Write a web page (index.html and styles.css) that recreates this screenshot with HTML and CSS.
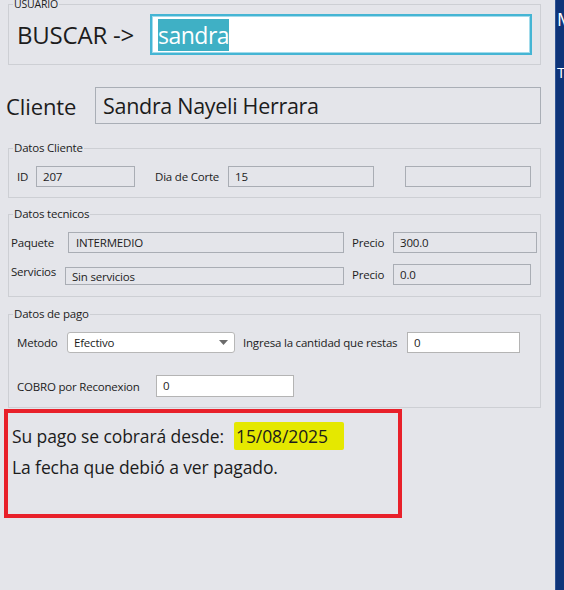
FILE: index.html
```html
<!DOCTYPE html>
<html lang="es">
<head>
    <meta charset="UTF-8">
    <meta name="viewport" content="width=device-width, initial-scale=1.0">
    <title>Cobro-Cliente</title>
    <link rel="stylesheet" href="styles.css">
</head>
<body>
    <div class="app">
        <div class="main">
            <fieldset class="group group-user">
                <legend class="legend-user">USUARIO</legend>
                <div class="search-row">
                    <span class="search-label">BUSCAR -&gt;</span>
                    <div class="search-input"><span class="selected">sandra</span></div>
                </div>
            </fieldset>

            <div class="client-row">
                <span class="client-label">Cliente</span>
                <div class="client-name">Sandra Nayeli Herrara</div>
            </div>

            <fieldset class="group group-client">
                <legend>Datos Cliente</legend>
                <div class="row">
                    <span class="lbl w-id">ID</span>
                    <div class="field f-id">207</div>
                    <span class="lbl w-corte">Dia de Corte</span>
                    <div class="field f-corte">15</div>
                    <div class="field f-blank"></div>
                </div>
            </fieldset>

            <fieldset class="group group-tec">
                <legend>Datos tecnicos</legend>
                <div class="row">
                    <span class="lbl w-paquete">Paquete</span>
                    <div class="field f-paquete">INTERMEDIO</div>
                    <span class="lbl w-precio">Precio</span>
                    <div class="field f-precio">300.0</div>
                </div>
                <div class="row row-serv">
                    <span class="lbl w-serv">Servicios</span>
                    <div class="field f-serv">Sin servicios</div>
                    <span class="lbl w-precio">Precio</span>
                    <div class="field f-precio2">0.0</div>
                </div>
            </fieldset>

            <fieldset class="group group-pago">
                <legend>Datos de pago</legend>
                <div class="row">
                    <span class="lbl w-metodo">Metodo</span>
                    <div class="select">
                        <span>Efectivo</span>
                        <svg class="arrow" width="9" height="5" viewBox="0 0 9 5"><path d="M0 0H9L4.5 5Z" fill="#6b6b6b"/></svg>
                    </div>
                    <span class="lbl w-resta">Ingresa la cantidad que restas</span>
                    <div class="field edit f-resta">0</div>
                </div>
                <div class="row row-cobro">
                    <span class="lbl w-cobro">COBRO por Reconexion</span>
                    <div class="field edit f-cobro">0</div>
                </div>
            </fieldset>

            <div class="notice">
                <div class="notice-line">
                    <span class="notice-label">Su pago se cobrará desde:</span>
                    <span class="mark">15/08/2025</span>
                </div>
                <div class="notice-line second">La fecha que debió a ver pagado.</div>
            </div>
        </div>
        <div class="side">
            <div class="side-title">M</div>
            <div class="side-text">T</div>
        </div>
    </div>
</body>
</html>
```

FILE: styles.css
```css
body {
    margin: 0;
    background-color: #e4e5ea;
    font-family: "Open Sans", "Noto Sans", sans-serif;
    color: #1c1c1c;
}
.app {
    display: flex;
    height: 590px;
    overflow: hidden;
}
.main {
    width: 555px;
    flex-shrink: 0;
}
.side {
    flex: 1;
    background-color: #0e3479;
    border-left: 1px solid #2f5494;
    color: #fff;
    overflow: hidden;
    padding-left: 1px;
    white-space: nowrap;
}
.side-title {
    font-size: 18px;
    line-height: 20px;
    margin-top: 9px;
}
.side-text {
    font-size: 15px;
    line-height: 18px;
    margin-top: 34px;
}

/* grupos */
.group {
    box-sizing: border-box;
    width: 533px;
    min-width: 0;
    margin: 0 0 0 8px;
    padding: 10px 0;
    border: 1px solid #cdcfd4;
}
.group legend {
    margin-left: 4px;
    padding: 0 1px;
    font-size: 11.5px;
    line-height: 16px;
    letter-spacing: -0.2px;
}
.group-user {
    margin-top: -2px;
    padding: 4px 0 9px 0;
}
.legend-user {
    font-size: 10.5px !important;
    line-height: 12px !important;
}
.group-client {
    margin-top: 16px;
}
.group-tec {
    margin-top: 8px;
    padding-bottom: 11px;
}
.group-pago {
    margin-top: 9px;
}

/* buscar */
.search-row {
    display: flex;
    align-items: center;
    padding-left: 8px;
}
.search-label {
    width: 133px;
    font-size: 24px;
    letter-spacing: -0.2px;
}
.search-input {
    box-sizing: border-box;
    width: 382px;
    height: 41px;
    background-color: #fff;
    border: 2px solid #45b5d4;
    box-shadow: inset 0 0 0 1px #a2dbeb;
    display: flex;
    align-items: center;
    padding-left: 6px;
}
.selected {
    background-color: #3fb0c5;
    color: #fff;
    font-size: 23px;
    line-height: 32px;
    letter-spacing: -0.5px;
}

/* cliente */
.client-row {
    display: flex;
    align-items: center;
    margin: 22px 0 0 6px;
}
.client-label {
    width: 89px;
    font-size: 22px;
    letter-spacing: -0.1px;
}
.client-name {
    box-sizing: border-box;
    width: 446px;
    height: 37px;
    border: 1px solid #a9aeb6;
    padding-left: 7px;
    font-size: 21.5px;
    line-height: 35px;
    letter-spacing: -0.3px;
}

/* filas */
.row {
    display: flex;
    align-items: center;
    font-size: 11.5px;
    letter-spacing: -0.2px;
}
.group-client .row,
.group-pago .row {
    padding-left: 8px;
}
.group-tec .row {
    padding-left: 2px;
}
.row-serv {
    margin-top: 11px;
}
.row-cobro {
    margin-top: 22px;
}
.lbl {
    flex-shrink: 0;
}
.field {
    box-sizing: border-box;
    height: 21px;
    border: 1px solid #a9adb4;
    padding-left: 6px;
    line-height: 19px;
    flex-shrink: 0;
}
.edit {
    background-color: #fff;
    border-color: #b4b4b4;
}
.w-id { width: 19px; }
.f-id { width: 99px; }
.w-corte { width: 73px; margin-left: 20px; }
.f-corte { width: 146px; }
.f-blank { width: 126px; margin-left: 31px; }

.w-paquete { width: 57px; }
.f-paquete { width: 276px; padding-left: 7px; }
.w-precio { width: 41px; margin-left: 8px; }
.f-precio { width: 144px; }
.w-serv { width: 54px; align-self: flex-start; line-height: 16px; }
.f-serv { width: 279px; height: 18px; margin-top: 2px; line-height: 17px; }
.f-precio2 { width: 138px; }

.w-metodo { width: 50px; }
.select {
    box-sizing: border-box;
    width: 168px;
    height: 21px;
    background-color: #fff;
    border: 1px solid #b7b7b7;
    border-radius: 3px;
    display: flex;
    align-items: center;
    justify-content: space-between;
    padding: 0 6px 0 6px;
    flex-shrink: 0;
}
.w-resta { width: 164px; margin-left: 8px; }
.f-resta { width: 113px; }
.w-cobro { width: 139px; }
.f-cobro { width: 138px; height: 22px; }

/* aviso */
.notice {
    box-sizing: border-box;
    width: 398px;
    height: 109px;
    margin: 1px 0 0 4px;
    border: 4px solid #e8202a;
    padding: 9px 0 0 4px;
    font-size: 17.5px;
    letter-spacing: -0.1px;
}
.notice-line {
    display: flex;
    align-items: center;
    height: 28px;
}
.notice-label {
    width: 222px;
}
.mark {
    box-sizing: border-box;
    width: 110px;
    height: 28px;
    line-height: 28px;
    padding-left: 2px;
    background-color: #e5e800;
    border-radius: 2px;
}
.second {
    margin-top: 3px;
}
```
